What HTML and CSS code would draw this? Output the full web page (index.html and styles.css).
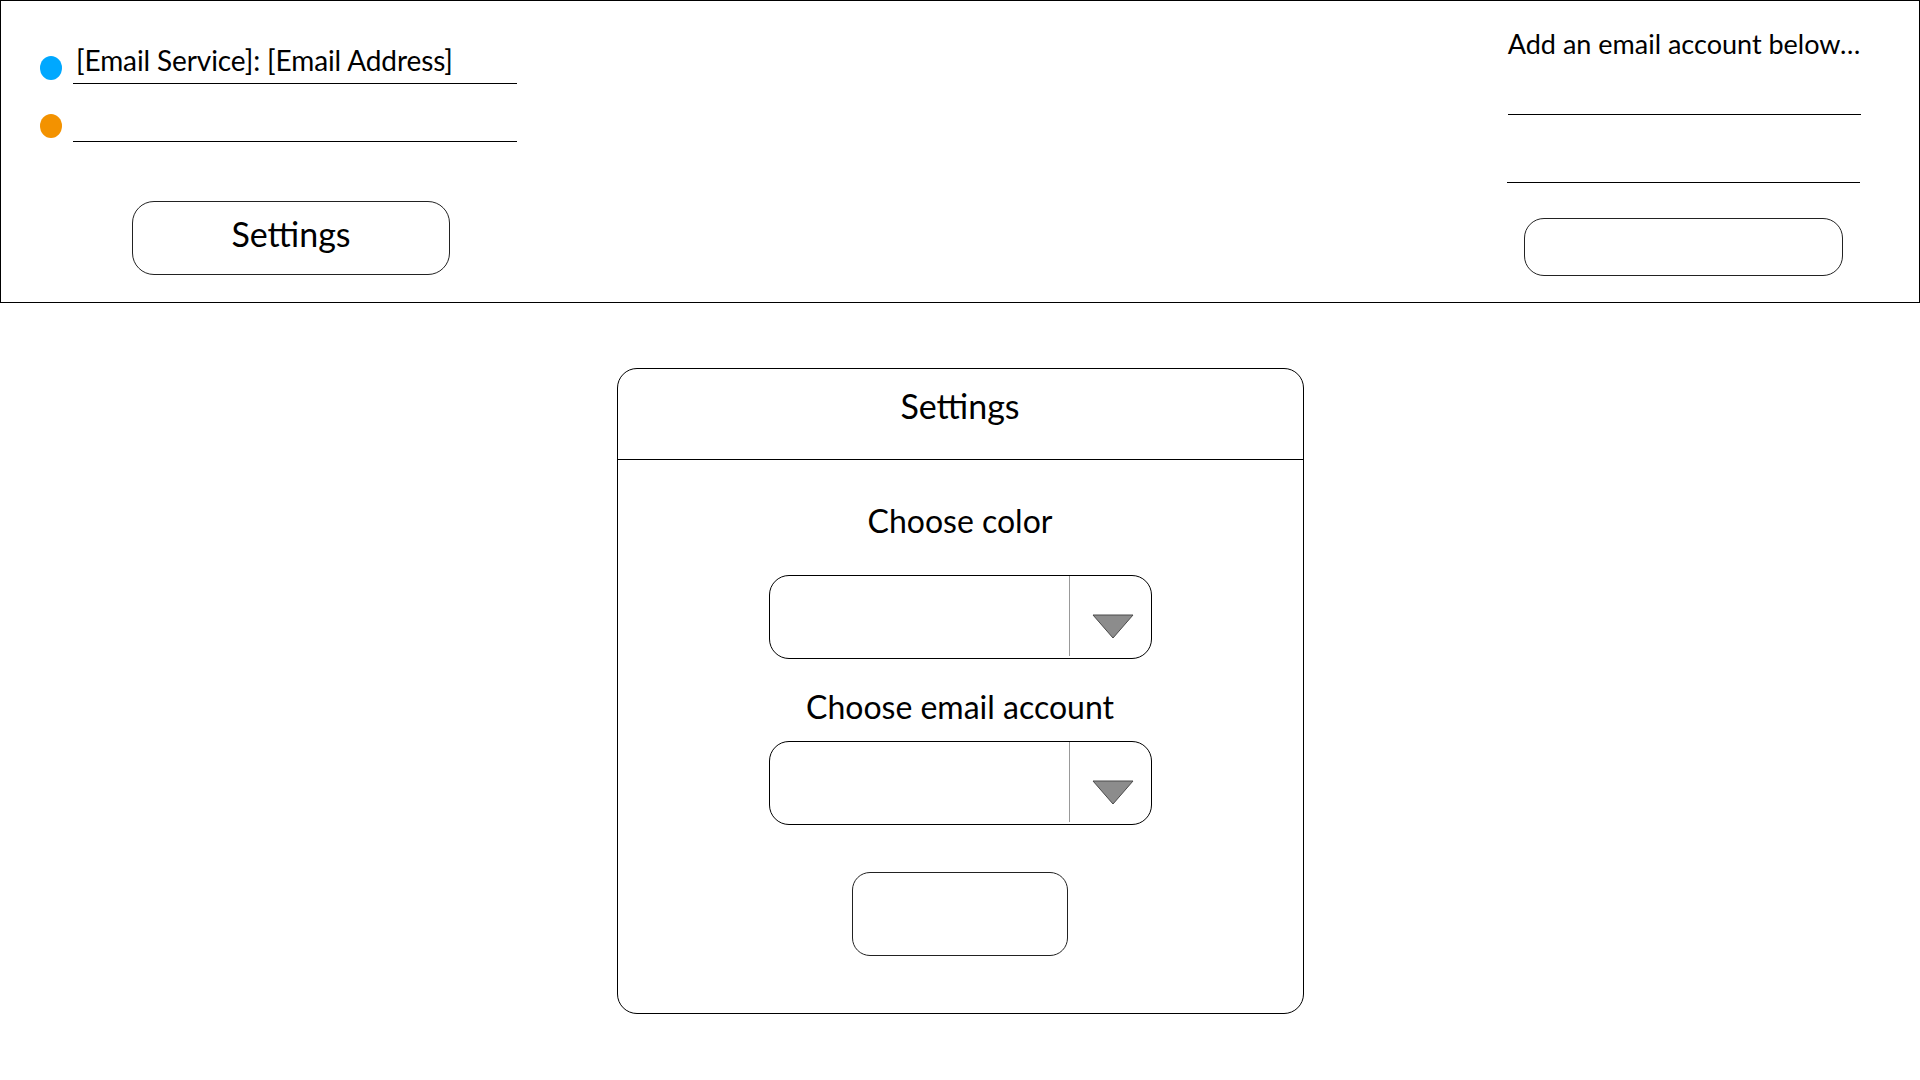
FILE: index.html
```html
<!DOCTYPE html>
<html lang="en">
<head>
<meta charset="utf-8">
<title>Email accounts</title>
<link rel="stylesheet" href="styles.css">
</head>
<body>
<header class="topbar">
  <section class="accounts">
    <div class="account-row">
      <span class="dot dot-blue"></span>
      <div class="field">[Email Service]: [Email Address]</div>
    </div>
    <div class="account-row">
      <span class="dot dot-orange"></span>
      <div class="field"></div>
    </div>
    <button class="btn btn-settings">Settings</button>
  </section>
  <section class="add-account">
    <div class="add-title">Add an email account below…</div>
    <div class="line line-1"></div>
    <div class="line line-2"></div>
    <button class="btn btn-add"></button>
  </section>
</header>

<main class="panel">
  <div class="panel-head">Settings</div>
  <div class="panel-body">
    <div class="label label-color">Choose color</div>
    <div class="select select-color">
      <div class="select-value"></div>
      <div class="select-arrow">
        <svg width="42" height="26" viewBox="0 0 42 26"><polygon points="1,1 41,1 21,24" fill="#8c8c8c" stroke="#4a4a4a" stroke-width="1" stroke-linejoin="round"/></svg>
      </div>
    </div>
    <div class="label label-account">Choose email account</div>
    <div class="select select-account">
      <div class="select-value"></div>
      <div class="select-arrow">
        <svg width="42" height="26" viewBox="0 0 42 26"><polygon points="1,1 41,1 21,24" fill="#8c8c8c" stroke="#4a4a4a" stroke-width="1" stroke-linejoin="round"/></svg>
      </div>
    </div>
    <button class="btn btn-save"></button>
  </div>
</main>
</body>
</html>
```

FILE: styles.css
```css
* { box-sizing: border-box; }

html, body {
  margin: 0;
  padding: 0;
  background: #fff;
}

body {
  font-family: Lato, "Open Sans", sans-serif;
  color: #000;
  width: 1920px;
  height: 1080px;
  overflow: hidden;
}

.topbar {
  height: 303px;
  border: 1px solid #000;
  display: flex;
  justify-content: space-between;
}

.accounts {
  padding-top: 40px;
  padding-left: 39px;
  display: flex;
  flex-direction: column;
  align-items: flex-start;
}

.account-row {
  display: flex;
  align-items: flex-end;
  gap: 11px;
}

.account-row + .account-row {
  margin-top: 15px;
}

.dot {
  width: 22px;
  height: 24px;
  border-radius: 50%;
  margin-bottom: 4px;
  flex: none;
}

.dot-blue { background: #00a8ff; }
.dot-orange { background: #f39200; }

.field {
  width: 444px;
  height: 43px;
  border-bottom: 1px solid #000;
  font-size: 28px;
  letter-spacing: -0.1px;
  line-height: 38px;
  padding-left: 3px;
  white-space: nowrap;
}

.btn {
  display: block;
  background: #fff;
  border: 1px solid #222;
  padding: 0;
  font-family: inherit;
  color: #000;
}

.btn-settings {
  margin-top: 59px;
  margin-left: 92px;
  width: 318px;
  height: 74px;
  border-radius: 22px;
  font-size: 34px;
  line-height: 40px;
  padding-bottom: 9px;
}

.add-account {
  width: 354px;
  margin-right: 58px;
  padding-top: 26px;
  display: flex;
  flex-direction: column;
}

.add-title {
  font-size: 27px;
  line-height: 33px;
  text-align: center;
  white-space: nowrap;
}

.line {
  border-bottom: 1px solid #000;
}

.line-1 {
  height: 55px;
  margin-left: 1px;
}

.line-2 {
  height: 68px;
  margin-right: 1px;
}

.btn-add {
  margin-top: 35px;
  margin-left: 17px;
  width: 319px;
  height: 58px;
  border-radius: 20px;
}

.panel {
  width: 687px;
  height: 646px;
  margin: 65px auto 0;
  border: 1px solid #000;
  border-radius: 20px;
  display: flex;
  flex-direction: column;
}

.panel-head {
  height: 91px;
  border-bottom: 1px solid #000;
  padding-top: 17px;
  font-size: 34px;
  line-height: 40px;
  text-align: center;
}

.panel-body {
  padding-top: 41px;
  display: flex;
  flex-direction: column;
  align-items: center;
}

.label {
  font-size: 32px;
  line-height: 40px;
  text-align: center;
  white-space: nowrap;
}

.select {
  width: 383px;
  height: 84px;
  border: 1px solid #000;
  border-radius: 20px;
  display: flex;
}

.select-color { margin-top: 34px; }
.label-account { margin-top: 28px; }
.select-account { margin-top: 14px; }

.select-value {
  width: 300px;
  border-right: 1px solid #999;
  margin-bottom: 2px;
}

.select-arrow {
  flex: 1;
  display: flex;
  justify-content: center;
  padding-top: 38px;
  padding-left: 6px;
}

.btn-save {
  margin-top: 47px;
  width: 216px;
  height: 84px;
  border-radius: 18px;
}
```
